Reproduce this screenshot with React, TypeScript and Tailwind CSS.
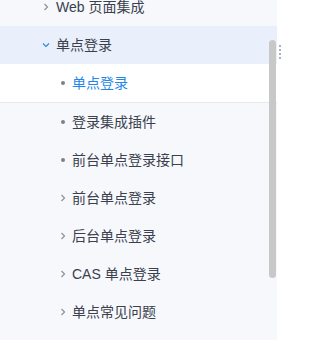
import React from "react";

type Item = { label: string; kind: "dot" | "arrow"; active?: boolean };

const children: Item[] = [
  { label: "单点登录", kind: "dot", active: true },
  { label: "登录集成插件", kind: "dot" },
  { label: "前台单点登录接口", kind: "dot" },
  { label: "前台单点登录", kind: "arrow" },
  { label: "后台单点登录", kind: "arrow" },
  { label: "CAS 单点登录", kind: "arrow" },
  { label: "单点常见问题", kind: "arrow" },
];

function Chevron({ down, className }: { down?: boolean; className?: string }) {
  return (
    <svg width="8" height="8" viewBox="0 0 8 8" className={className} fill="none">
      {down ? (
        <path d="M1 2.5 L4 5.5 L7 2.5" stroke="currentColor" strokeWidth="1.2" />
      ) : (
        <path d="M2.5 1 L5.5 4 L2.5 7" stroke="currentColor" strokeWidth="1.2" />
      )}
    </svg>
  );
}

export default function App() {
  return (
    <div className="relative h-[340px] w-[310px] overflow-hidden bg-white font-['Liberation_Sans','Noto_Sans_CJK_SC',sans-serif] text-[14px] text-[#3a404c]">
      <div className="flex h-full w-[277px] flex-col bg-[#f6f8fc]">
        <div className="-mt-[12px] flex flex-col">
          <div className="flex h-[38px] items-center pl-[42px]">
            <Chevron className="text-[#8c929c]" />
            <span className="ml-[6px]">Web 页面集成</span>
          </div>
          <div className="flex h-[38px] items-center bg-[#e9f0fb] pl-[42px]">
            <Chevron down className="text-[#2f86e6]" />
            <span className="ml-[6px]">单点登录</span>
          </div>
          {children.map((item) => (
            <div
              key={item.label}
              className={
                item.active
                  ? "flex h-[39px] items-center border-b border-[#e6e9ee] bg-white pl-[60px] text-[#1f87e8]"
                  : "flex h-[38px] items-center pl-[60px]"
              }
            >
              {item.kind === "dot" ? (
                <span className="flex w-[6px] justify-center">
                  <span className="size-[4px] rounded-full bg-[#7b818c]" />
                </span>
              ) : (
                <Chevron className="-ml-[1px] text-[#8c929c]" />
              )}
              <span className={item.kind === "dot" ? "ml-[6px]" : "ml-[5px]"}>{item.label}</span>
            </div>
          ))}
        </div>
      </div>
      <div className="absolute left-[269px] top-[40px] h-[238px] w-[7px] rounded-full bg-[#c8c8c8]" />
      <div className="absolute left-[279px] top-[45px] flex flex-col gap-[2px]">
        <span className="size-[2px] bg-[#a9b1bd]" />
        <span className="size-[2px] bg-[#a9b1bd]" />
        <span className="size-[2px] bg-[#a9b1bd]" />
        <span className="size-[2px] bg-[#a9b1bd]" />
      </div>
    </div>
  );
}
